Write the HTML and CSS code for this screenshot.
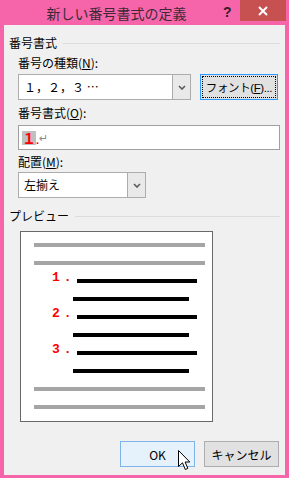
FILE: index.html
```html
<!DOCTYPE html>
<html lang="ja">
<head>
  <meta charset="UTF-8" />
  <meta name="viewport" content="width=device-width, initial-scale=1.0"/>
  <title>新しい番号書式の定義</title>
  <link rel="stylesheet" href="styles.css">
</head>
<body>
  <div class="window">
    <div class="titlebar">
      <div class="title">新しい番号書式の定義</div>
      <div class="help">?</div>
      <div class="close">
        <svg width="10" height="10" viewBox="0 0 10 10"><path d="M1 1 L9 9 M9 1 L1 9" stroke="#fff" stroke-width="2"/></svg>
      </div>
    </div>

    <div class="client">
      <div class="group">番号書式<span class="rule"></span></div>

      <div class="section">
        <label class="lbl">番号の種類(<u>N</u>):</label>
        <div class="row">
          <div class="combo kind">
            <span class="value">１，２，３ …</span>
            <span class="drop"><svg width="8" height="5" viewBox="0 0 8 5"><path d="M1 1 L4 4 L7 1" fill="none" stroke="#5a5a5a" stroke-width="1.6"/></svg></span>
          </div>
          <button class="btn focus">フォント(<u>F</u>)...</button>
        </div>

        <label class="lbl">番号書式(<u>O</u>):</label>
        <div class="field"><span class="sel">１</span><span class="dot">.</span><span class="ret">↵</span></div>

        <label class="lbl">配置(<u>M</u>):</label>
        <div class="combo align">
          <span class="value">左揃え</span>
          <span class="drop"><svg width="8" height="5" viewBox="0 0 8 5"><path d="M1 1 L4 4 L7 1" fill="none" stroke="#5a5a5a" stroke-width="1.6"/></svg></span>
        </div>
      </div>

      <div class="group preview-head">プレビュー<span class="rule"></span></div>

      <div class="preview">
        <div class="bar gray"></div>
        <div class="bar gray"></div>
        <div class="item"><span class="num">1.</span><div class="bar black"></div></div>
        <div class="bar black sub"></div>
        <div class="item"><span class="num">2.</span><div class="bar black"></div></div>
        <div class="bar black sub"></div>
        <div class="item"><span class="num">3.</span><div class="bar black"></div></div>
        <div class="bar black sub"></div>
        <div class="bar gray"></div>
        <div class="bar gray"></div>
      </div>

      <div class="buttons">
        <button class="btn ok">OK</button>
        <button class="btn">キャンセル</button>
      </div>
    </div>

    <!-- mouse pointer hovering the OK button -->
    <svg class="cursor" width="13" height="21" viewBox="0 0 13 21">
      <path d="M0.5 0.5 L0.5 16.5 L4.5 12.8 L7.3 19.5 L9.8 18.4 L7.1 12 L11.8 12 Z" fill="#fff" stroke="#000" stroke-width="1"/>
    </svg>
  </div>
</body>
</html>
```

FILE: styles.css
```css
html, body {
  margin: 0;
  padding: 0;
}
body {
  font-family: "Noto Sans CJK JP", "Noto Sans", sans-serif;
  font-size: 12px;
  color: #000;
}
.window {
  position: relative;
  width: 289px;
  height: 478px;
  background: #f665a9;
  display: flex;
  flex-direction: column;
  box-sizing: border-box;
}
.titlebar {
  height: 25px;
  display: flex;
  align-items: flex-start;
}
.title {
  flex: 1;
  text-align: center;
  font-size: 14px;
  line-height: 26px;
  color: #3b2a36;
  padding-left: 10px;
}
.help {
  width: 17px;
  font-family: "Liberation Sans", sans-serif;
  font-weight: bold;
  font-size: 14px;
  line-height: 24px;
  color: #2e2029;
  text-align: left;
}
.close {
  width: 46px;
  height: 21px;
  margin-right: 3px;
  background: #c75050;
  display: flex;
  align-items: center;
  justify-content: center;
}
.client {
  flex: 1;
  margin: 0 4px 3px 4px;
  background: #f0f0f0;
  display: flex;
  flex-direction: column;
}
.group {
  display: flex;
  align-items: center;
  height: 16px;
  line-height: 16px;
  margin: 10px 5px 0 5px;
}
.rule {
  flex: 1;
  margin-left: 6px;
  border-top: 1px solid #dcdcdc;
}
.section {
  padding: 0 5px 0 14px;
  display: flex;
  flex-direction: column;
}
.lbl {
  display: block;
  height: 16px;
  line-height: 16px;
  margin-top: 4px;
}
.row {
  display: flex;
  align-items: center;
  gap: 9px;
  margin-top: 3px;
}
.combo {
  display: flex;
  align-items: stretch;
  height: 26px;
  box-sizing: border-box;
  background: #fff;
  border: 1px solid #acacac;
}
.combo .value {
  flex: 1;
  line-height: 24px;
  padding-left: 5px;
}
.combo .drop {
  width: 17px;
  background: #e9e9e9;
  border-left: 1px solid #acacac;
  display: flex;
  align-items: center;
  justify-content: center;
}
.kind {
  width: 173px;
}
.align {
  width: 128px;
  margin-top: 2px;
}
.btn {
  font-family: inherit;
  font-size: 12px;
  height: 26px;
  box-sizing: border-box;
  padding: 0;
  background: #e1e1e1;
  border: 1px solid #adadad;
  color: #000;
  white-space: nowrap;
}
.btn.focus {
  flex: none;
  width: 78px;
  border-color: #3399ff;
  outline: 1px dotted #000;
  outline-offset: -3px;
  font-family: "Liberation Sans", "Noto Sans CJK JP", sans-serif;
  font-size: 11.5px;
  letter-spacing: -0.4px;
  overflow: visible;
}
.btn.ok {
  background: #e5f1fb;
  border-color: #7eb4ea;
}
.row + .lbl {
  margin-top: 5px;
}
.field {
  width: 262px;
  height: 25px;
  box-sizing: border-box;
  margin-top: 4px;
  background: #fff;
  border: 1px solid #a0a0a0;
  display: flex;
  align-items: center;
  padding-left: 3px;
}
.sel {
  background: #c0c0c0;
  color: #ff0000;
  font-size: 14px;
  line-height: 14px;
  height: 14px;
  width: 14px;
  text-align: center;
  font-weight: bold;
}
.dot {
  color: #ff0000;
  font-family: "Liberation Sans", sans-serif;
  font-weight: bold;
  font-size: 11px;
  margin-top: 4px;
}
.ret {
  color: #8a8a8a;
  font-family: "DejaVu Sans", sans-serif;
  font-size: 11px;
  margin-top: 2px;
}
.preview-head {
  margin-top: 10px;
}
.preview {
  width: 193px;
  height: 191px;
  box-sizing: border-box;
  margin: 7px 0 0 16px;
  background: #fff;
  border: 1px solid #696969;
  padding: 11px 0;
  display: flex;
  flex-direction: column;
  gap: 14px;
}
.bar {
  height: 4px;
  flex: none;
}
.bar.gray {
  background: #a5a5a5;
  width: 171px;
  margin-left: 13px;
}
.bar.black {
  background: #000;
  width: 120px;
}
.bar.sub {
  width: 116px;
  margin-left: 52px;
}
.item {
  display: flex;
  align-items: flex-end;
  height: 4px;
  margin-left: 31px;
}
.num {
  width: 25px;
  color: #ff0000;
  font-family: "Liberation Mono", monospace;
  font-weight: bold;
  font-size: 13px;
  line-height: 11px;
  letter-spacing: 4px;
}
.buttons {
  display: flex;
  justify-content: flex-end;
  gap: 9px;
  padding-right: 6px;
  margin-top: 19px;
}
.buttons .btn {
  width: 75px;
  height: 26px;
}
.cursor {
  position: absolute;
  left: 178px;
  top: 450px;
}
```
